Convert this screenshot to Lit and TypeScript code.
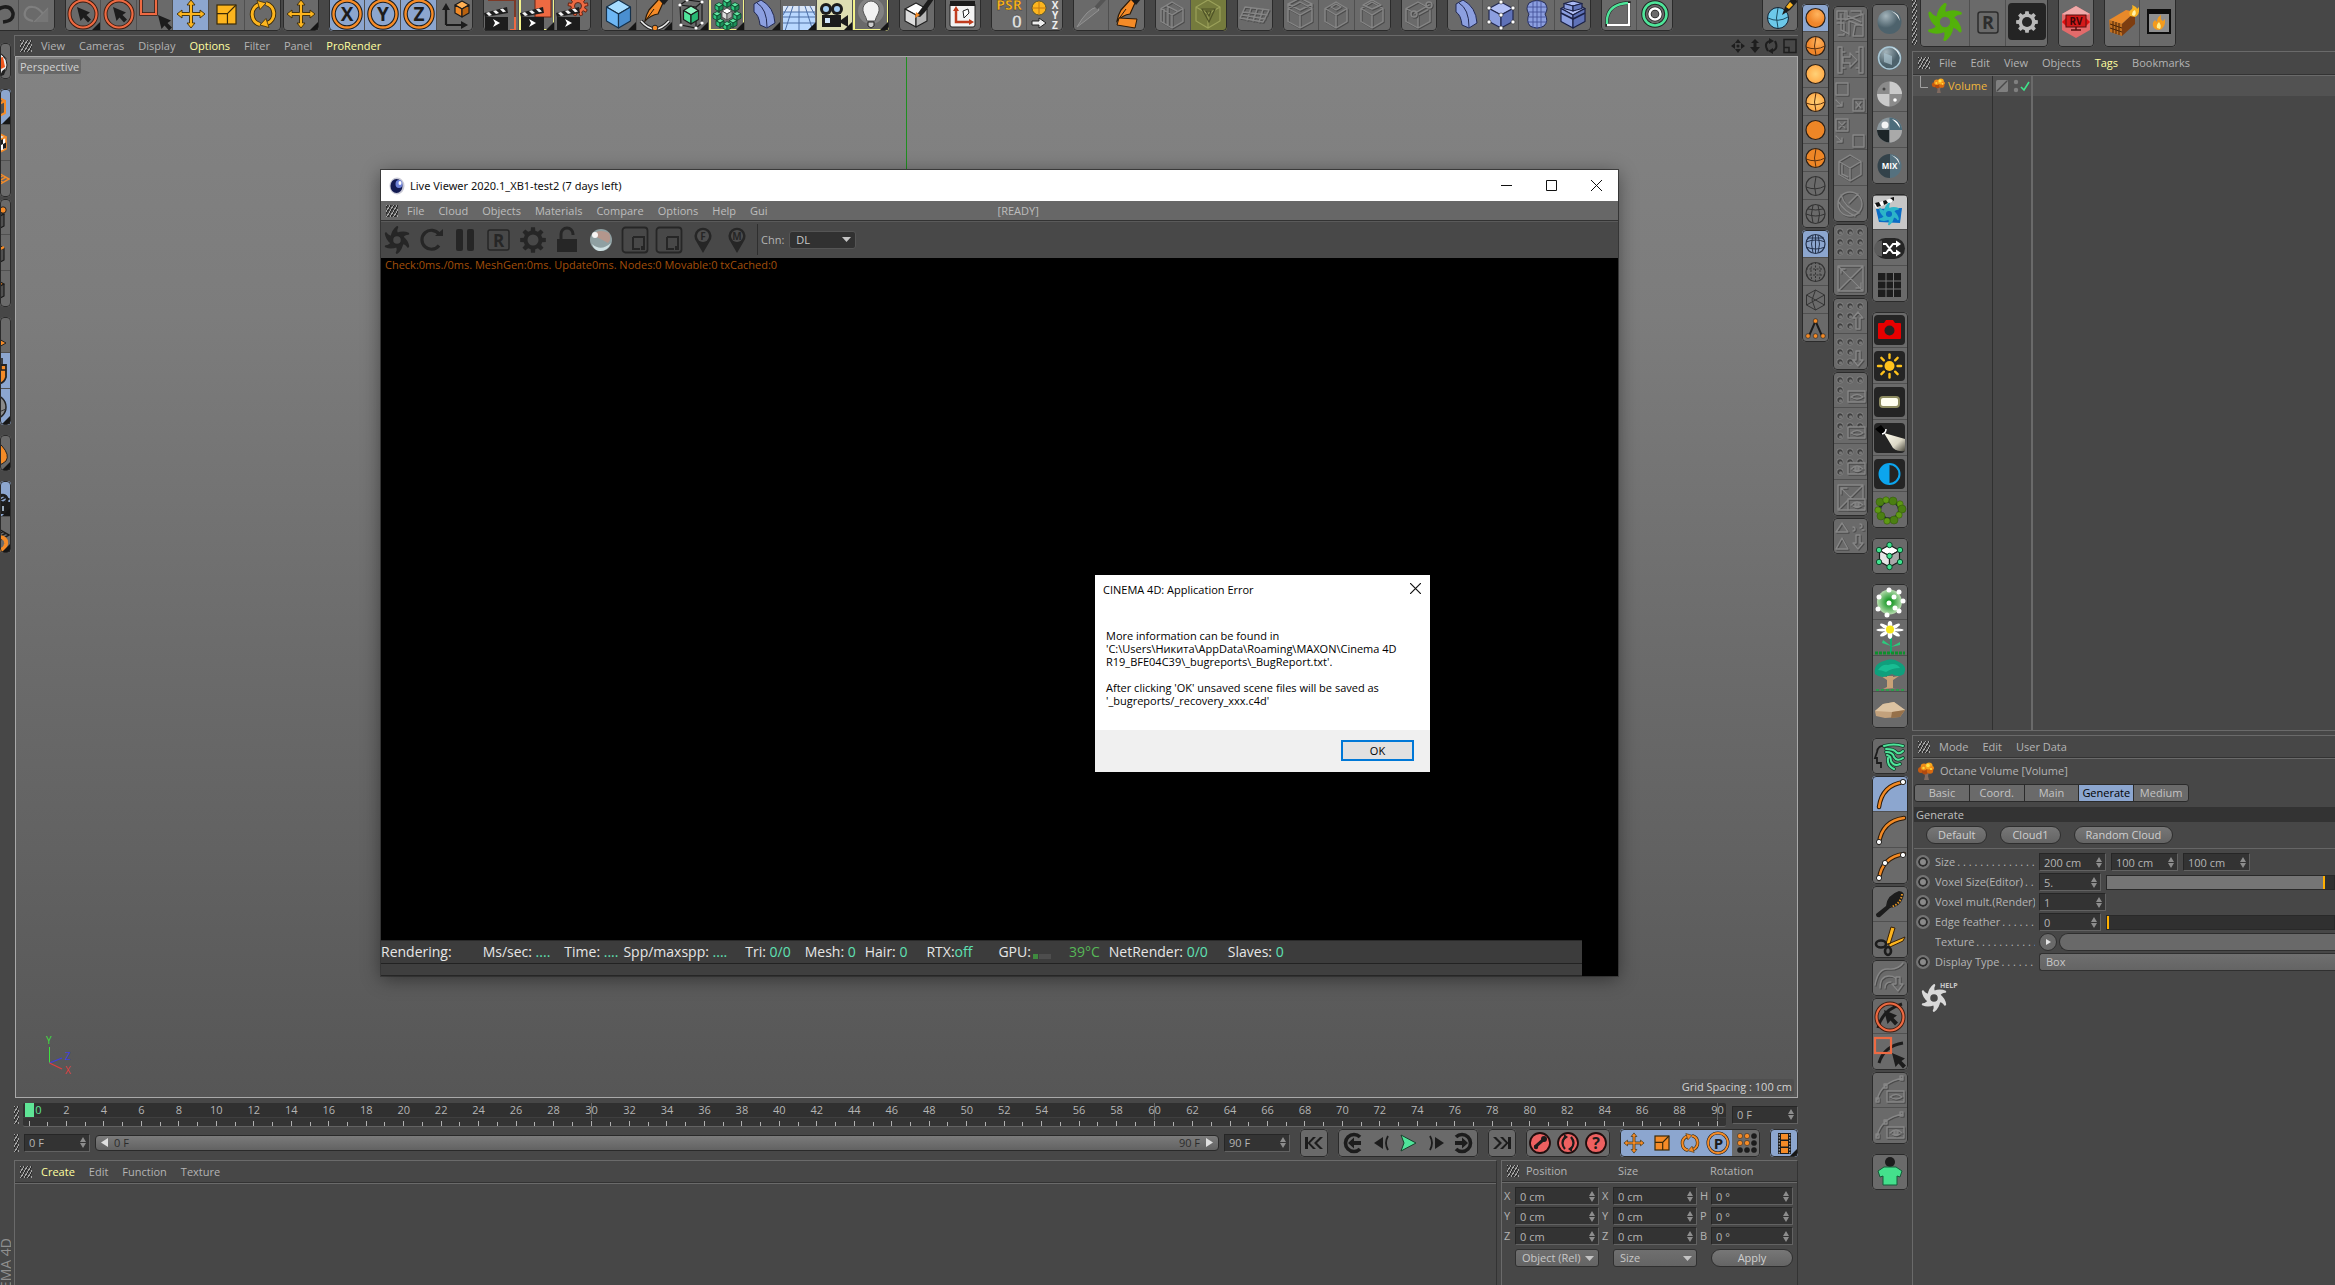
import { LitElement, html, svg, css } from "lit";
import type { SVGTemplateResult } from "lit";
import { customElement } from "lit/decorators.js";

type Art = SVGTemplateResult;

/* ---------- drawing helpers ---------- */

const INK = "#1c1c1c";
const AMBER = "#fdb51e";
const ORANGE = "#f58b27";
const RED = "#ee6a42";
const MINT = "#4fe59a";
const PERI = "#8c9fe0";

const wire = (cx: number, cy: number, w: number, h: number) => {
  const q = h / 2;
  return `M${cx} ${cy - h}L${cx + w} ${cy - q}V${cy + q}L${cx} ${cy + h}L${cx - w} ${cy + q}V${cy - q}ZM${cx - w} ${cy - q}L${cx} ${cy}L${cx + w} ${cy - q}M${cx} ${cy}V${cy + h}`;
};

const cube = (cx: number, cy: number, w: number, h: number, top: string, left: string, right: string, line = INK, lw = 1.2): Art => {
  const q = h / 2;
  return svg`<g stroke=${line} stroke-width=${lw} stroke-linejoin="round">
    <path fill=${top} d=${`M${cx} ${cy - h}L${cx + w} ${cy - q}L${cx} ${cy}L${cx - w} ${cy - q}Z`}/>
    <path fill=${left} d=${`M${cx - w} ${cy - q}L${cx} ${cy}V${cy + h}L${cx - w} ${cy + q}Z`}/>
    <path fill=${right} d=${`M${cx + w} ${cy - q}L${cx} ${cy}V${cy + h}L${cx + w} ${cy + q}Z`}/></g>`;
};

const emboss = (d: string, lw = 1.4): Art => svg`<g fill="none" stroke-width=${lw} stroke-linejoin="round" stroke-linecap="round">
  <path d=${d} stroke="#4b4b4b" transform="translate(1 1)"/><path d=${d} stroke="#868686"/></g>`;

const cursor = (x: number, y: number, s = 1): Art =>
  svg`<path fill=${INK} transform=${`translate(${x} ${y}) scale(${s})`} d="M0 0L3.5 14L6.5 10.5L11 15.5L14 12.5L9.5 8L13 5.500Z"/>`;

const gear = (cx: number, cy: number, ro: number, ri: number, n: number) => {
  let d = "";
  for (let i = 0; i < n; i++) {
    const a = (i / n) * Math.PI * 2;
    const s = Math.PI / n;
    const pts: [number, number][] = [[-0.62, ri], [-0.4, ro], [0.4, ro], [0.62, ri]];
    for (const [k, r] of pts) {
      d += `${d ? "L" : "M"}${(cx + Math.sin(a + k * s) * r).toFixed(2)} ${(cy - Math.cos(a + k * s) * r).toFixed(2)}`;
    }
  }
  return d + "Z";
};

const swirl = (cx: number, cy: number, s: number, fill: string): Art => svg`<g transform=${`translate(${cx} ${cy}) scale(${s})`}>
  <circle r="6.500" fill="none" stroke=${fill} stroke-width="4"/>
  ${[0, 60, 120, 180, 240, 300].map(a => svg`<path transform=${`rotate(${a})`} fill=${fill} d="M-7.500 -4Q-6.500 -12 -.5 -16.500Q1.500 -17 1.500 -15Q-1 -11 2 -6Z"/>`)}</g>`;

const corner = svg`<path d="M35 27V35H27Z" fill="#161616"/>`;

const four = (fill: string, cx = 18, cy = 19, s = 1): Art =>
  svg`<path transform=${`translate(${cx} ${cy}) scale(${s})`} fill=${fill} stroke="#3a2a08" stroke-width=".9" stroke-linejoin="round"
   d="M0 -14L4 -9H1.500V-1.500H9V-4L14 0L9 4V1.500H1.500V9H4L0 14L-4 9H-1.500V1.500H-9V4L-14 0L-9 -4V-1.500H-1.500V-9H-4Z"/>`;

const spin = (fill: string, cx = 18, cy = 19, s = 1): Art => svg`<g transform=${`translate(${cx} ${cy}) scale(${s})`}>
  ${[0, 180].map(a => svg`<g transform=${`rotate(${a})`}>
    <path d="M-3 10.500A10.500 10.500 0 0 1 -4 -9.500" fill="none" stroke="#3a2a08" stroke-width="4.800"/>
    <path d="M-3 10.500A10.500 10.500 0 0 1 -4 -9.500" fill="none" stroke=${fill} stroke-width="3"/>
    <path d="M-6 -13.500L3 -11L-3 -4.500Z" fill=${fill} stroke="#3a2a08" stroke-width=".8"/></g>`)}</g>`;

const scaleBox = (fill: string, x: number, y: number, w: number): Art => svg`<g stroke="#3a2a08" stroke-width="1.200">
  <rect x=${x} y=${y} width=${w} height=${w} fill=${fill}/>
  <path fill="none" d=${`M${x} ${y + w * 0.45}H${x + w * 0.55}V${y + w}M${x + w * 0.55} ${y + w * 0.45}L${x + w} ${y}`}/></g>`;

const ring = (letter: string): Art => svg`<circle cx="18" cy="19" r="13.500" fill="none" stroke=${INK} stroke-width="4.500"/>
  <circle cx="18" cy="19" r="13.500" fill="none" stroke=${ORANGE} stroke-width="2.400"/>
  <text x="18" y="26" text-anchor="middle" class="glyph" font-size="19" fill=${INK}>${letter}</text>`;

const pick = svg`<circle cx="18" cy="19" r="13.500" fill="none" stroke="#3c1b10" stroke-width="4"/>
  <circle cx="18" cy="19" r="13.500" fill="none" stroke=${RED} stroke-width="2.200"/>${cursor(12, 12)}`;

const clapper = (extra: Art): Art => svg`${extra}
  <path fill=${INK} d="M2 22H25V36H2Z"/><path fill=${INK} d="M1 18L24 12L25 18L2 22Z"/>
  <path fill="#f4f4f4" d="M3 18L6 17L9 20L6 21ZM10 16L13 15.200L16 18L13 19ZM17 14.200L20 13.400L23 16.500L20 17.300Z"/>
  <path fill="#fff" d="M10 24L17 28L10 32L12 28Z"/>`;

const ball = (fill: string, extra: Art = svg``, edge = "#2c2118"): Art =>
  svg`<circle cx="13.500" cy="14" r="9.500" fill=${fill} stroke=${edge} stroke-width="1.200"/>${extra}`;

const seams = svg`<path fill="none" stroke="#5b3210" stroke-width="1" d="M4 15Q14 19 23 14M14 4.500Q11 14 14 23.500"/>`;

const nine = (hide: number[] = []): Art => svg`${[0, 1, 2, 3, 4, 5, 6, 7, 8].filter(i => !hide.includes(i)).map(i => {
  const x = 7 + (i % 3) * 10, y = 8 + Math.floor(i / 3) * 10;
  return svg`<circle cx=${x} cy=${y} r="3.400" fill="#858585"/><circle cx=${x} cy=${y} r="2.700" fill="#414141"/><circle cx=${x + 0.6} cy=${y + 0.9} r="1.700" fill="#777"/>`;
})}`;

const eyeBox = (open: boolean): Art => svg`<path d="M15 19H33V31H15Z" fill="#6b6b6b"/>${emboss("M15 19H32V30H15Z")}
  ${emboss(open ? "M18 25Q24 19 30 25M20 26Q24 29 28 26M22 24H26V26H22Z" : "M18 25Q24 20 30 25Q24 29 18 25")}`;

const tile = svg`<rect x="2" y="3" width="31" height="30" rx="4" fill="#242424"/>`;

const glass = (fill: string, extra: Art = svg``): Art => svg`<circle cx="17.500" cy="18" r="12" fill=${fill}/>${extra}
  <path d="M19 7Q27 9 28 17Q24 9 19 7Z" fill="#fff" opacity=".85"/>`;

const badge = (inner: Art): Art => svg`<circle cx="14" cy="14" r="10" fill="#ee6060" stroke="#200d0d" stroke-width="1.800"/>${inner}`;

const grid45 = (stroke: string): Art =>
  svg`<path fill="none" stroke=${stroke} stroke-width="1.500" d="M10 18L22 11L34 18L22 25ZM16 14.500L28 21.500M28 14.500L16 21.500M13 16L25 23M31 16L19 23"/>`;

const pen = (tip: string): Art => svg`<path d="M12 15L22 4L26 8L21 19Q14 20 8 26Q9 20 12 15Z" fill=${tip} stroke="#2b1a08" stroke-width="1.200"/>
  <path d="M20 2L30 0L32 4L27 10Z" fill=${INK}/><path d="M9 25L17 14" stroke="#2b1a08"/>`;

const flame = svg`<path d="M8 10H13L12 14L13 18H8L9 14Z" fill="#806a60"/>
  <circle cx="5" cy="8" r="3" fill="#c65a10"/><circle cx="9" cy="9.500" r="3" fill="#b04a10"/><circle cx="14" cy="8.500" r="3.200" fill="#d8690f"/>
  <circle cx="8" cy="5" r="3.400" fill="#ee8a17"/><circle cx="13" cy="4" r="3.600" fill="#f9a81a"/><circle cx="16" cy="6" r="2" fill="#f08a14"/>
  <circle cx="12" cy="3.500" r="1.800" fill="#ffe04a"/><circle cx="7.500" cy="6" r="1.300" fill="#ffd23a"/><circle cx="15" cy="7" r="1" fill="#ffe04a"/>`;

const curve = (dots: [number, number][]): Art => svg`<path d="M7 31Q10 9 32 6" fill="none" stroke="#2c1a08" stroke-width="4.500" stroke-linecap="round"/>
  <path d="M7 31Q10 9 32 6" fill="none" stroke="#f28a25" stroke-width="2.400" stroke-linecap="round"/>
  ${dots.map(([x, y]) => svg`<circle cx=${x} cy=${y} r="2.600" fill="#fff" stroke="#222"/>`)}`;

const pin = (l: string): Art => svg`<path d="M14 27L7 15A8.500 8.500 0 1 1 21 15Z" fill="#262626"/><circle cx="14" cy="10" r="6" fill="#4d4d4d"/>
  <text x="14" y="13.500" text-anchor="middle" class="glyph" font-size="10" fill="#262626">${l}</text>`;

/* ---------- icon table ---------- */

const icons: Record<string, Art> = {
  undo: svg`<path d="M20 27Q31 26 30 18Q28 11 21 12Q14 13 13 20" fill="none" stroke=${INK} stroke-width="3.500"/>`,
  redo: svg`<path d="M14 26Q4 24 6 17Q8 11 14 12Q19 12 25 20M28 15V26H17Z" fill="none" stroke="#7f7f7f" stroke-width="2.200"/><path d="M29 14V27H16Z" fill="#767676"/>`,
  pick,
  boxpick: svg`<rect x="4" y="3" width="15" height="16" fill="none" stroke="#3c1b10" stroke-width="3.500"/><rect x="4" y="3" width="15" height="16" fill="none" stroke=${RED} stroke-width="2"/>${cursor(21, 20)}`,
  move: four(AMBER),
  scale: scaleBox(AMBER, 8, 10, 19),
  rotate: spin(AMBER),
  axisX: ring("X"),
  axisY: ring("Y"),
  axisZ: ring("Z"),
  coord: svg`<path d="M9 30V13M9 30H26" stroke=${INK} stroke-width="2.200"/><path d="M9 8L13 15H5ZM31 30L24 26V34Z" fill=${INK}/>${cube(25, 14, 7, 8, "#ffb054", "#f28a25", "#b9620f")}`,
  render: clapper(svg`<path d="M5 5H32V35H27" fill="none" stroke="#7d3a28" stroke-width="2"/><path d="M27 35H32V22" fill="none" stroke=${RED} stroke-width="2"/>`),
  renderPv: clapper(svg`<rect x="16" y="4" width="16" height="18" fill=${RED} stroke="#6a2412"/>`),
  renderSet: clapper(svg`<path d=${gear(23, 11, 10, 7, 9)} fill=${RED} stroke="#6a2412"/><circle cx="23" cy="11" r="3.500" fill="#6b6b6b" stroke="#6a2412"/>`),
  cube: cube(17.5, 19, 12, 14, "#a6dcff", "#6db7f5", "#4a8fd0", "#16324c"),
  pen: svg`${pen(ORANGE)}<path d="M4 26Q18 42 32 26" fill="none" stroke="#222" stroke-width="3.500"/><path d="M4 26Q18 42 32 26" fill="none" stroke="#eee" stroke-width="1.600"/><circle cx="18" cy="33" r="2.800" fill=${ORANGE} stroke="#222"/>`,
  subdiv: svg`<path d="M7 10L14 5L29 7V28L23 33L8 30ZM7 10L23 12L29 7M23 12V33" fill="none" stroke=${INK} stroke-width="1.200"/>${cube(18, 20, 7.5, 9, "#8cf7c0", MINT, "#27b873")}
    ${[[7, 10], [14, 5], [29, 7], [29, 28], [23, 33], [8, 30]].map(([x, y]) => svg`<circle cx=${x} cy=${y} r="1.600" fill="#fff"/>`)}`,
  cloner: svg`${[[18, 8], [26, 12], [28, 21], [24, 28], [18, 31], [11, 28], [8, 21], [10, 12]].map(([x, y]) => cube(x, y, 4, 4.5, "#5fe39f", "#2fc57d", "#1d8f58", "#0d4028", 0.8))}${cube(18, 19, 5, 6, "#fff", "#ddd", "#aaa", "#444", 0.8)}`,
  bend: svg`<path d="M9 9L16 5Q29 12 30 28L22 33L15 30Q14 20 9 17Z" fill=${PERI} stroke="#232a52"/><path d="M12 8Q22 14 22 32" fill="none" stroke="#232a52"/>`,
  floor: svg`<rect x="2" y="11" width="32" height="25" fill="#b9d8ff"/><rect x="2" y="11" width="32" height="6" fill="#d9e5f7"/><path d="M2 17H34M2 22H34M2 28H34M18 11V36M12 11L4 36M24 11L32 36M7 11L2 20M29 11L34 20" stroke="#4c6ea5" fill="none"/>`,
  camera: svg`<circle cx="9" cy="14" r="6" fill=${INK}/><circle cx="20" cy="14" r="6" fill=${INK}/><circle cx="9" cy="14" r="3" fill="#a5cff5"/><circle cx="20" cy="14" r="3" fill="#a5cff5"/><rect x="5" y="20" width="19" height="12" fill=${INK}/><path d="M24 25L31 20V32L24 28Z" fill=${INK}/><rect x="8" y="23" width="5" height="5" fill="#cfe4fb"/>`,
  bulb: svg`<circle cx="18" cy="16" r="13" fill="#999" opacity=".5"/><path d="M14 26Q13 22 11 19Q8 12 13 8Q18 4 23 8Q28 12 25 19Q23 22 22 26Z" fill="#f2f2f2" stroke="#555"/><path d="M15 27H21V31L18 33L15 31Z" fill="#ccc" stroke="#222"/>`,
  paint: svg`${cube(17, 20, 11, 12, "#fff", "#ddd", "#b5b5b5", "#222")}<path d="M17 21L22 14L26 17L21 22ZM22 14L31 2L35 4L26 17Z" fill=${INK}/><path d="M16 23L17 17L21 20Z" fill=${ORANGE}/>`,
  axisWin: svg`<rect x="5" y="8" width="25" height="24" rx="2" fill="#f3f3f3" stroke="#222"/><rect x="5" y="6" width="25" height="5" fill=${INK}/><path d="M11 14V27H25" fill="none" stroke="#c03c1e" stroke-width="2.500"/><path d="M11 11L14 16H8ZM29 27L24 24V30Z" fill="#c03c1e"/><path d="M18 16L23 14L24 18L19 23Z" fill="#fff" stroke="#222"/>`,
  psr: svg`<text x="18" y="15" text-anchor="middle" class="glyph" font-size="14" fill=${AMBER} stroke="#222" stroke-width=".3">PSR</text><text x="26" y="33" text-anchor="middle" class="glyph" font-size="18" fill="#ddd" stroke="#222" stroke-width=".3">0</text>`,
  xyz: svg`<circle cx="12" cy="13" r="7" fill=${AMBER} stroke="#553"/><path d="M12 6V20M5 13H19" stroke="#c47a10"/><path d="M5 26H12V23L19 28L12 33V30H5Z" fill="#eee" stroke="#222"/><text text-anchor="middle" class="glyph" font-size="10" fill="#eee"><tspan x="28" y="14">X</tspan><tspan x="28" y="24">Y</tspan><tspan x="28" y="34">Z</tspan></text>`,
  knife: svg`<path d="M4 32Q14 14 24 12L26 15L12 26Z" fill="#777" stroke="#929292"/><path d="M23 13L32 3" stroke="#555" stroke-width="4"/>`,
  polypen: svg`${pen(ORANGE)}<path d="M10 23L28 24L26 33L8 30Z" fill=${ORANGE} stroke="#2b1a08"/>`,
  ghost1: emboss(wire(17, 20, 11, 13) + "M9 14V28M13 12V30M12 11L22 16"),
  ghost2: svg`<path d=${wire(17, 19, 12, 14)} fill="none" stroke="#9ba15a" stroke-width="1.200"/><path d="M11 14H24L18 27ZM15 16H20L18 21Z" fill="none" stroke="#4e5226" stroke-width="1.200"/>`,
  ghostGrid: emboss("M8 12L32 15L26 27L3 23ZM14 13L10 25M20 14L16 26M26 14L22 27M6 17L30 20M5 20L28 24"),
  ghostCube1: emboss(wire(17, 20, 12, 13) + "M5 9L17 15L29 9M5 9L17 3L29 9V12M5 9V12"),
  ghostCube2: emboss(wire(17, 20, 11, 13) + "M12 12L17 9L22 12L17 15Z"),
  ghostCube3: emboss(wire(17, 20, 11, 13) + "M8 10L17 14L26 10L17 5Z"),
  ghostLink: svg`${emboss(wire(17, 20, 12, 13))}${emboss("M14 18L28 10M28 7A3 3 0 1 1 28 13A3 3 0 1 1 28 7M13 16A3 3 0 1 1 13 22A3 3 0 1 1 13 16")}`,
  lattice: svg`${cube(18, 20, 12, 13, "#b2c0f5", PERI, "#5f72b8", "#232a52")}${[[18, 7], [30, 13], [6, 13], [18, 20], [30, 27], [6, 27], [18, 33]].map(([x, y]) => svg`<circle cx=${x} cy=${y} r="2" fill="#fff" stroke="#333" stroke-width=".6"/>`)}`,
  mesh: svg`<path d="M10 8Q18 3 26 8Q30 14 26 19Q30 26 25 31Q18 35 11 31Q7 26 10 19Q6 14 10 8Z" fill=${PERI} stroke="#232a52"/><path d="M14 6V33M18 5V34M22 6V33M8 12H28M9 17H27M9 22H27M8 27H28" fill="none" stroke="#45549a" stroke-width=".9"/>`,
  capBox: svg`${cube(18, 20, 12, 13, "#b2c0f5", PERI, "#5f72b8", "#1b2146")}<path d="M6 18L18 24L30 18" fill="none" stroke="#1b2146" stroke-width="1.800"/>${cube(18, 11, 9, 5, "#a9b8f3", PERI, "#5f72b8", "#1b2146")}`,
  quarter: svg`<path d="M6 30V24Q8 9 26 8H28V30Z" fill="none" stroke="#222" stroke-width="3.500"/><path d="M6 30H28V8" fill="none" stroke="#fff" stroke-width="2.400"/><path d="M6 29V24Q8 9 27 8" fill="none" stroke=${MINT} stroke-width="2.400"/>`,
  rings: svg`<circle cx="18" cy="19" r="11.500" fill="none" stroke="#222" stroke-width="4.500"/><circle cx="18" cy="19" r="11.500" fill="none" stroke=${MINT} stroke-width="2.600"/><circle cx="18" cy="19" r="5.500" fill="none" stroke="#222" stroke-width="4"/><circle cx="18" cy="19" r="5.500" fill="none" stroke="#fff" stroke-width="2.400"/>`,
  sculpt: svg`<circle cx="16" cy="23" r="10.500" fill="#6cc9ea" stroke="#123"/><path d="M6 23Q16 28 26 22M16 13Q13 23 16 33" fill="none" stroke="#1c4c60"/><path d="M20 20L23 12L30 3L36 6L28 15Z" fill=${INK}/><path d="M24 12L28 7L31 10L27 14Z" fill=${AMBER}/>`,

  globe: svg`<circle cx="19" cy="22" r="13" fill="#eee" stroke="#222"/><path d="M19 16L28 14L30 24L22 28Z" fill="#f0561c"/><path d="M26 10L32 16L29 15ZM31 25L29 32L25 33L27 28Z" fill="#222"/>`,
  model: cube(19, 18, 11, 12, "#5a5a5a", "#444", "#505050", ORANGE, 2),
  texture: svg`${cube(19, 18, 12, 12, "#ddd", "#ccc", "#fff", ORANGE, 1.6)}<path d="M24 16L28 14V19L24 21ZM28 19L31 17.500V23L28 24Z" fill=${INK}/>`,
  plane: grid45(ORANGE),
  points: svg`${cube(18, 21, 11, 12, "#5a5a5a", "#444", "#505050")}<circle cx="28" cy="11" r="3.200" fill=${ORANGE} stroke="#222"/>`,
  edges: svg`${cube(18, 19, 11, 12, "#5a5a5a", "#444", "#505050")}<path d="M18 18L29 12" stroke=${ORANGE} stroke-width="2.500"/>`,
  polys: svg`${cube(18, 19, 11, 12, ORANGE, "#444", "#505050")}`,
  axisMode: svg`<path d="M10 26H26" stroke=${ORANGE} stroke-width="2"/><path d="M31 26L24 22V30Z" fill=${ORANGE} stroke="#222"/>`,
  mouse: svg`<path d="M12 12H31V24Q29 31 22 31Q12 31 12 22Z" fill=${ORANGE} stroke="#222" stroke-width="1.800"/><path d="M12 17H31M26 12V17M27 5V12" stroke="#222" stroke-width="1.600"/>`,
  solo: svg`<circle cx="19" cy="18" r="12" fill="#8a8a8a" stroke="#222" stroke-width="1.500"/><path d="M7 22Q20 26 31 20" fill="none" stroke="#333"/>`,
  magnet: svg`<path d="M10 30Q6 20 17 12Q24 6 27 11Q35 20 31 26Q24 33 10 30Z" fill=${ORANGE} stroke="#222"/>`,
  lock: svg`${grid45(INK)}<rect x="21" y="21" width="14" height="12" fill=${INK}/><path d="M24 21V18A4 4 0 0 1 32 18V21" fill="none" stroke=${INK} stroke-width="2.600"/><rect x="27" y="25" width="2" height="5" fill="#9ab"/>`,
  snapRot: svg`${grid45(INK)}<path d="M23 20Q32 20 31 27Q30 33 24 33" fill="none" stroke=${ORANGE} stroke-width="4"/>`,

  s1: ball("url(#gOrange)"), s2: ball("url(#gOrange)", seams), s3: ball("url(#gPeach)"), s4: ball("url(#gPeach)", seams),
  s5: ball("#ee8626"), s6: ball("#ee8626", seams),
  s7: ball("none", svg`<path fill="none" stroke="#333" d="M4 15Q14 19 23 14M14 4.500Q11 14 14 23.500"/>`, "#333"),
  s8: ball("none", svg`<path fill="none" stroke="#333" d="M4 14Q14 18 23 14M11 5Q8 14 11 23M16 5Q19 14 16 23M6 9Q14 11 21 9"/>`, "#333"),
  s9: ball("none", svg`<path fill="none" stroke="#26344e" d="M4 12Q14 8 23 12M4 17Q14 21 23 17M5 8H22M11 5Q8 14 11 23M16 5Q19 14 16 23M13.500 4V24"/>`, "#26344e"),
  s10: ball("none", svg`<path fill="none" stroke="#333" stroke-dasharray="2 1.500" d="M4 11H23M4 17H23M10 5Q8 14 10 23M17 5Q19 14 17 23M13.500 4V24"/>`, "#333"),
  s11: svg`<path fill="none" stroke="#333" d="M13.500 4L22.500 9V19L13.500 24L4.500 19V9ZM4.500 9L22.500 19M22.500 9L4.500 19M13.500 4L10 14L13.500 24"/>`,
  s12: svg`<path fill="none" stroke=${INK} stroke-width="2" d="M7 22L13.500 7L20 22"/>${[[13.5, 7], [6, 22], [13.5, 22], [21, 22]].map(([x, y]) => svg`<circle cx=${x} cy=${y} r="2.300" fill=${ORANGE} stroke="#222" stroke-width=".6"/>`)}`,

  g1: emboss("M4 5H14V13H4ZM18 5H28V10M4 17H11V29H5M15 10L28 16M22 19H30V30H20ZM8 8V24L16 28M12 5V14L30 8V20L16 15V29"),
  g2: emboss("M5 5H9V31H5ZM26 5H30V31H26ZM9 10H12M9 26H12M26 10H23M26 26H23M10 15H17V11L24 18L17 25V21H10Z"),
  g3: emboss("M3 5H15V17H3ZM3 22L9 28V24M9 28H4M20 21H31V33H20ZM23 24L28 30M28 24L23 30"),
  g4: emboss("M3 5H15V17H3ZM6 8L12 14M12 8L6 14M3 22L9 28V24M9 28H4M20 21H31V33H20Z"),
  g5: emboss(wire(17, 18, 11, 13) + "M9 15V24L15 27"),
  g6: emboss("M29 18A12 12 0 1 1 5 18A12 12 0 1 1 29 18M8 9Q12 22 26 27M5 15Q12 26 22 30M16 17L25 8"),
  g7: nine(),
  g8: emboss("M5 6H30V31H5ZM5 6L30 31M30 6L5 31M12 9H8V13M23 28H28V23"),
  g9: svg`${nine([5, 8])}${emboss("M23 31V20H20L25 14L30 20H27V31Z")}`,
  g10: svg`${nine([5, 8])}${emboss("M23 17V26H20L25 32L30 26H27V17Z")}`,
  g11: svg`${nine([4, 5, 7, 8])}${eyeBox(false)}`,
  g12: svg`${nine([7, 8])}${eyeBox(false)}`,
  g13: svg`${nine([7, 8])}${eyeBox(true)}`,
  g14: svg`${emboss("M5 5H30V30H5ZM8 8L28 28M8 14V8H14M30 5L5 30")}${eyeBox(true)}`,
  g15: emboss("M9 5L15 14H3ZM9 20L15 31H3ZM20 9A2 2 0 1 1 20 13M27 6A2 2 0 1 1 27 10M29 12H31M23 17V25H20L25 31L30 25H27V17Z"),

  m1: glass("url(#gSteel)"),
  m2: glass("url(#gSteel)", svg`<path d="M12 13L20 16V25L12 22Z" fill="#a9c2cd" opacity=".7"/><circle cx="17.500" cy="18" r="11" fill="none" stroke="#a9c6d4" stroke-width="1.500"/>`),
  m3: svg`<circle cx="17.500" cy="18" r="12.500" fill="#757575"/><path d="M17.500 18V5.500A12.500 12.500 0 0 0 5 18ZM17.500 18V30.500A12.500 12.500 0 0 0 30 18Z" fill="#8b8b8b"/><path d="M17.500 18V5.500A12.500 12.500 0 0 1 30 18ZM17.500 18V30.500A12.500 12.500 0 0 1 5 18Z" fill="#cacaca"/><circle cx="12" cy="13" r="1.500" fill="#444"/><circle cx="23" cy="24" r="1.800" fill="#fff"/>`,
  m4: svg`<circle cx="17.500" cy="18" r="12.500" fill="#8b979d"/><path d="M17.500 18V30.500A12.500 12.500 0 0 1 5 18Z" fill="#1d2528"/><path d="M17.500 18V5.500A12.500 12.500 0 0 1 30 18Z" fill="#4c6c7b"/><path d="M17.500 18H30A12.500 12.500 0 0 1 17.500 30.500Z" fill="#a9a9a9"/><circle cx="13" cy="13" r="3.500" fill="#fff" opacity=".9"/><path d="M20 7Q27 9 28 16Q24 10 20 7Z" fill="#fff"/>`,
  m5: glass("url(#gDeep)", svg`<text x="17.500" y="21" text-anchor="middle" class="glyph" font-size="8" fill="#fff">MIX</text>`),
  oct: svg`<rect x="1" y="2" width="34" height="33" fill="#c6c6c6"/><path d="M4 15L30 14L28 29L7 28Z" fill="#0b6cc4"/><path d="M2 10L20 4V8L4 14Z" fill="#fff"/><path d="M3 9L7 8L9 12L5 13ZM11 7L14 6L16 9L12 11ZM18 4L22 3L22 7Z" fill="#111"/>${swirl(17, 20, 0.68, "#2cb5c8")}`,
  shuffle: svg`<rect x="3" y="8" width="30" height="21" rx="10.500" fill="#242424"/><path d="M10 10.500A8 8 0 0 0 10 26.500Z" fill="#5c5c5c"/><path d="M11 14H14L21 23H25M11 23H14L21 14H25" fill="none" stroke="#fff" stroke-width="2"/><path d="M24 10.500L29 14L24 17.500ZM24 19.500L29 23L24 26.500Z" fill="#fff"/>`,
  blackGrid: svg`<rect x="6" y="7" width="23" height="24" fill="#1d1d1d"/><path d="M14 7V31M21.500 7V31M6 15H29M6 23H29" stroke="#777"/>`,
  redCam: svg`${tile}<path d="M7 11H12L14 8H21L23 11H28Q29 11 29 12V26Q29 27 28 27H7Q6 27 6 26V12Q6 11 7 11Z" fill="#e60000"/><circle cx="17.500" cy="18.500" r="5" fill="#242424"/>`,
  sun: svg`${tile}<circle cx="17.500" cy="18" r="5" fill="#ffc21c"/>${[0, 45, 90, 135, 180, 225, 270, 315].map(a => svg`<path transform=${`rotate(${a} 17.500 18)`} d="M17.500 10V6.500" stroke="#ffc21c" stroke-width="2.400" stroke-linecap="round"/>`)}`,
  area: svg`${tile}<rect x="7" y="12" width="21" height="12" rx="4" fill="#8d8b60"/><rect x="9" y="14" width="17" height="8" rx="2" fill="#fffef0"/>`,
  spot: svg`${tile}<path d="M12 13L33 19V31Q26 32 21 28Z" fill="url(#gBeam)"/><path d="M3 9L9 5L14 11L10 15Z" fill="#000"/><path d="M10 14Q14 13 14 9" fill="none" stroke="#fff" stroke-width="1.500"/>`,
  half: svg`${tile}<circle cx="17.500" cy="18" r="10" fill="none" stroke="#0ca5ee" stroke-width="2"/><path d="M17.500 8A10 10 0 0 0 17.500 28Z" fill="#0ca5ee"/>`,
  wreath: svg`<ellipse cx="17.500" cy="18" rx="10" ry="9" fill="none" stroke="#1c2433" stroke-width="3"/>${[[8, 10], [14, 8], [21, 9], [28, 12], [30, 17], [27, 23], [22, 28], [15, 29], [9, 24], [6, 18]].map(([x, y], i) => svg`<circle cx=${x} cy=${y} r=${i % 2 ? 3.2 : 4} fill=${i % 2 ? "#5f9a14" : "#4b7f12"} stroke="#355c0c" stroke-width=".6"/>`)}`,
  nodes: svg`${cube(17.5, 18, 10, 11, "#fff", "#e6e6e6", "#aaa")}${[[17.5, 7], [28, 12], [7, 12], [17.5, 18], [28, 24], [7, 24], [17.5, 29]].map(([x, y]) => svg`<circle cx=${x} cy=${y} r="2.700" fill="#3fe38f" stroke="#0e4a2b"/>`)}`,
  cell: svg`<circle cx="17.500" cy="18" r="12.500" fill="url(#gCell)"/>${[[17, 6], [27, 8], [31, 17], [27, 27], [15, 31], [6, 25], [7, 13], [17, 19], [22, 13], [23, 24]].map(([x, y]) => svg`<circle cx=${x} cy=${y} r="2.500" fill="#fff"/>`)}`,
  daisy: svg`<path d="M19 16V33" stroke="#0fae6c" stroke-width="2"/><path d="M19 26L11 20L10 23ZM19 27L28 22L28 25Z" fill="#2ccb7e"/><path d="M3 33H33" stroke="#0d8f2c" stroke-width="3" stroke-dasharray="3 1"/>${[0, 45, 90, 135, 180, 225, 270, 315].map(a => svg`<ellipse transform=${`translate(18 10) scale(1.300 .85) rotate(${a})`} cx="0" cy="-6" rx="1.800" ry="4.500" fill="#fff"/>`)}<circle cx="18" cy="9.500" r="4" fill="#f6e71c"/>`,
  tree: svg`<path d="M15 20H21V32H25L11 33L15 31ZM15 24L9 20L15 21ZM21 24L27 20L21 21Z" fill="#c9a177"/><path d="M3 18Q1 8 12 5Q20 1 27 6Q36 10 32 18Q26 22 20 18Q10 24 3 18Z" fill="#0f9f7c"/><path d="M6 14Q10 8 16 9Q24 6 28 12Q20 12 14 16Q9 14 6 14Z" fill="#18bd93"/><path d="M4 34H32" stroke="#2c9c4b" stroke-width="2" stroke-dasharray="3 2"/>`,
  rock: svg`<path d="M3 19L11 12L22 10L33 18L28 25L13 26L4 24Z" fill="#c2a17c"/><path d="M3 19L11 12L22 10L33 18L20 20Z" fill="#dcc3a2"/><path d="M20 20L33 18L28 25L19 26Z" fill="#96714a"/>`,
  hair: svg`<path d="M13 8Q6 7 5 14L3 20H5V25H9V30" fill="none" stroke=${INK} stroke-width="1.800"/>
    <path d="M12 8Q22 5 31 8M14 11Q22 11 24 14Q27 17 31 13M14 14Q21 14 22 19Q25 24 31 20M15 17Q19 18 19 23Q22 29 28 26M16 20Q15 28 22 31" fill="none" stroke="#123f2c" stroke-width="3.600" stroke-linecap="round"/>
    <path d="M12 8Q22 5 31 8M14 11Q22 11 24 14Q27 17 31 13M14 14Q21 14 22 19Q25 24 31 20M15 17Q19 18 19 23Q22 29 28 26M16 20Q15 28 22 31" fill="none" stroke=${MINT} stroke-width="2" stroke-linecap="round"/>`,
  h1: curve([[31, 6]]), h2: curve([[7, 30]]), h3: curve([[31, 7], [13, 15], [7, 30]]),
  brush: svg`<path d="M4 28L14 20Q15 9 27 5Q34 6 31 12Q28 21 18 22L8 31Q4 32 4 28Z" fill=${INK}/><path d="M30 8Q29 18 19 21" fill="none" stroke="#e39322" stroke-width="2" stroke-dasharray="1.500 1.500"/>`,
  scissors: svg`<path d="M14 22L19 5L23 6L18 22ZM16 22L33 15L31 19L18 25Z" fill=${AMBER} stroke="#3a2206"/><ellipse cx="9" cy="22" rx="5" ry="3.500" fill="none" stroke=${INK} stroke-width="2.600"/><ellipse cx="16" cy="29" rx="3" ry="4" fill="none" stroke=${INK} stroke-width="2.600"/>`,
  hairGhost: emboss("M3 25Q6 8 16 9Q26 10 31 3M8 28Q8 16 17 16Q25 16 24 22M13 28Q13 22 19 22M24 17V24H20L26 31L31 24H28V17Z"),
  hairPick: svg`<path d="M6 30Q10 12 30 6" fill="none" stroke=${INK} stroke-width="3"/>${pick}`,
  hairBox: svg`<path d="M7 29Q12 12 31 9" fill="none" stroke=${INK} stroke-width="3"/><rect x="3" y="4" width="16" height="15" fill="none" stroke=${RED} stroke-width="2.200"/>${cursor(20, 19)}`,
  hg1: svg`${emboss("M5 28Q9 10 31 6M4 26H7V30H4ZM12 12H15V16H12ZM28 4H31V8H28Z")}${eyeBox(false)}`,
  hg2: svg`${emboss("M5 28Q9 10 31 6M4 26H7V30H4ZM12 12H15V16H12ZM28 4H31V8H28Z")}${eyeBox(true)}`,
  shirt: svg`<circle cx="18" cy="8" r="5" fill=${INK}/><path d="M12 13H24L30 17L28 23L25 22V31H11V22L8 23L6 17Z" fill="#44e08c" stroke="#145a38"/>`,

  octane: swirl(25, 22, 1.15, "#53b10a"),
  recR: svg`<rect x="8" y="12" width="20" height="21" rx="2.500" fill="none" stroke="#2d2d2d" stroke-width="1.500"/><text x="18" y="29" text-anchor="middle" class="glyph" font-size="18" fill="#2d2d2d">R</text>`,
  cog: svg`<rect x="2" y="3" width="38" height="37" rx="4" fill="#242424"/><path d=${gear(21, 22, 11, 8.5, 8)} fill="#b9b9b9"/><circle cx="21" cy="22" r="5" fill="#242424"/>`,
  rv: svg`<path d="M18 6L32 14V30L18 38L4 30V14Z" fill="#e26b6b"/><path d="M18 6L32 14L18 18L4 14Z" fill="#f0a9a9"/><path d="M4 22L8 18V26ZM32 22L28 18V26Z" fill="#e01010"/><rect x="8" y="15" width="20" height="12" fill="#d41a1a" stroke="#571010"/><text x="18" y="25" text-anchor="middle" class="glyph" font-size="10" fill="#3c0707">RV</text><path d="M13 30H23M18 27V30" stroke="#571010" stroke-width="1.500"/>`,
  bricks: svg`<path d="M5 20L18 24V36L6 32Z" fill="#c06f20"/><path d="M5 20L22 10L31 12L18 24Z" fill="#e8892a"/><path d="M18 24L31 12V24L18 36Z" fill="#7d3d10"/><path d="M6 24L18 28M6 28L18 32M9 21V33M12 22V34M15 23V35" stroke="#4c2608"/><path d="M26 16Q24 11 28 9Q29 7 28 5Q33 7 33 9L35 7Q36 15 31 17Z" fill="#f7b322"/><path d="M28 15Q28 11 31 10Q33 14 30 16Z" fill="#fff3ab"/>`,
  fireWin: svg`<rect x="8" y="10" width="22" height="23" fill="#8f8f8f" stroke="#0d0d0d" stroke-width="2"/><rect x="8" y="10" width="22" height="4" fill="#0d0d0d"/><path d="M14 28Q11 23 15 20L17 22Q17 17 21 15Q20 20 23 21L25 19Q26 28 19 30Q16 30 14 28Z" fill="#f49b1c"/><path d="M17 28Q16 25 19 22Q22 26 20 29Z" fill="#ffef8a"/>`,

  first: svg`<path d="M5 8H8V20H5ZM16 8L10 14L16 20H13L7.500 14L13 8ZM23 8L17 14L23 20H20L14 14L20 8Z" fill=${INK}/>`,
  prevKey: svg`<path d="M22 20A8.500 8.500 0 1 1 22 8" fill="none" stroke=${INK} stroke-width="3.600"/><path d="M10 14L16 8.500V12H23V16H16V19.500Z" fill=${INK}/>`,
  prev: svg`<path d="M17 8V20L8 14Z" fill=${INK}/><path d="M22 7Q18 14 22 21" fill="none" stroke=${INK} stroke-width="1.800"/>`,
  play: svg`<path d="M7 6L22 14L7 22L10 14Z" fill=${MINT} stroke="#17402b"/>`,
  next: svg`<path d="M13 8V20L22 14Z" fill=${INK}/><path d="M8 7Q12 14 8 21" fill="none" stroke=${INK} stroke-width="1.800"/>`,
  nextKey: svg`<path d="M6 8A8.500 8.500 0 1 1 6 20" fill="none" stroke=${INK} stroke-width="3.600"/><path d="M18 14L12 8.500V12H5V16H12V19.500Z" fill=${INK}/>`,
  last: svg`<g transform="rotate(180 14 14)"><path d="M5 8H8V20H5ZM16 8L10 14L16 20H13L7.500 14L13 8ZM23 8L17 14L23 20H20L14 14L20 8Z" fill=${INK}/></g>`,
  key: badge(svg`<path d="M9 18L17 11" stroke=${INK} stroke-width="3"/><circle cx="18" cy="10" r="3" fill=${INK}/><circle cx="10" cy="18" r="2.200" fill=${INK}/>`),
  autoKey: badge(svg`<path d="M11 8Q6 14 11 20M17 8Q22 14 17 20" fill="none" stroke=${INK} stroke-width="2.200"/><path d="M10 5L14 8L10 11ZM18 17L14 20L18 23Z" fill=${INK}/>`),
  askKey: badge(svg`<text x="14" y="20" text-anchor="middle" class="glyph" font-size="16" fill=${INK}>?</text>`),
  tMove: four(ORANGE, 14, 14, 0.72),
  tScale: scaleBox(ORANGE, 7, 7, 14),
  tRotate: spin(ORANGE, 14, 14, 0.7),
  tP: svg`<circle cx="14" cy="14" r="10" fill="none" stroke=${INK} stroke-width="3"/><circle cx="14" cy="14" r="10" fill="none" stroke=${ORANGE} stroke-width="1.800"/><text x="14.500" y="19.500" text-anchor="middle" class="glyph" font-size="15" fill=${INK}>P</text>`,
  tDots: svg`${[0, 1, 2, 3, 4, 5, 6, 7, 8].map(i => svg`<circle cx=${8 + (i % 3) * 7} cy=${7 + Math.floor(i / 3) * 7} r="2.600" fill=${[0, 1, 3, 4].includes(i) ? ORANGE : INK} stroke=${INK} stroke-width=".5"/>`)}`,
  film: svg`<rect x="8" y="4" width="13" height="21" fill=${INK}/><rect x="11" y="5" width="7" height="5.500" fill=${ORANGE}/><rect x="11" y="12" width="7" height="5.500" fill=${ORANGE}/><rect x="11" y="19" width="7" height="5" fill=${ORANGE}/><path d="M9.300 5V25M19.700 5V25" stroke="#a8a8a8" stroke-width="1.200" stroke-dasharray="1.500 1.500"/>`,

  lvSwirl: swirl(14, 14, 0.84, "#262626"),
  lvLoop: svg`<path d="M22 19.500A9.500 9.500 0 1 1 22 8" fill="none" stroke="#262626" stroke-width="3.200"/><path d="M18 10H26V3Z" fill="#262626"/>`,
  lvPause: svg`<rect x="5" y="3" width="7" height="22" rx="2" fill="#262626"/><rect x="16" y="3" width="7" height="22" rx="2" fill="#262626"/>`,
  lvR: svg`<rect x="3" y="4" width="21" height="20" rx="2" fill="none" stroke="#262626" stroke-width="1.500"/><text x="13.500" y="20.500" text-anchor="middle" class="glyph" font-size="17" fill="#262626">R</text>`,
  lvGear: svg`<path d=${gear(14, 14, 13, 9.5, 8)} fill="#262626"/><circle cx="14" cy="14" r="5.500" fill="#484848"/>`,
  lvLock: svg`<rect x="4" y="13" width="20" height="13" fill="#262626"/><path d="M8 13V8A6 6 0 0 1 20 8V9" fill="none" stroke="#262626" stroke-width="3"/>`,
  lvBall: svg`<circle cx="14" cy="14" r="11" fill="#8fa0a2"/><path d="M5 9Q12 2 22 7Q25 14 21 17Q12 12 5 9Z" fill="#b3968c"/><path d="M5 18Q14 26 24 17Q20 26 12 25Q7 24 5 18Z" fill="#cfe0e2"/><circle cx="8" cy="9" r="3" fill="#fff" opacity=".9"/>`,
  lvRegion: svg`<rect x="1.500" y="1.500" width="25" height="25" rx="3" fill="none" stroke="#262626" stroke-width="1.800"/><path d="M12 11H23V20M12 11V23H19" fill="none" stroke="#262626" stroke-width="2"/><path d="M20 20H24V24H20Z" fill="#262626"/>`,
  lvF: pin("F"),
  lvM: pin("M"),
};

/* Spec of a tool: name, then flags after dots: on, menu, hl, pale, olive. */
const tool = (spec: string, w: number, h: number) => {
  const [name, ...flags] = spec.split(".");
  return html`<button class="tool ${flags.join(" ")}" aria-label=${name}>
    <svg class="icon" width=${w} height=${h} viewBox=${`0 0 ${w} ${h}`} aria-hidden="true">${icons[name]}${flags.includes("menu")
      ? w === 28 ? svg`<path d="M27 20V27H20Z" fill="#161616"/>` : corner : ""}</svg></button>`;
};

const group = (specs: string, w = 36, h = 36, extra = "") =>
  html`<div class="group ${extra}" role="group">${specs.split(" ").map(s => tool(s, w, h))}</div>`;

const menu = (items: string, label: string) => html`<nav class="menubar" aria-label=${label}><span class="grip"></span>
  ${items.split("|").map(t => html`<button class="menu ${t.startsWith("*") ? "lit" : ""}">${t.replace("*", "")}</button>`)}</nav>`;

const field = (label: string, value: string) => html`<span class="field"><input type="text" aria-label=${label} .value=${value}>
  <svg width="6" height="11" viewBox="0 0 6 11" aria-hidden="true"><path d="M3 0L6 5H0ZM3 11L0 6H6Z" fill="#8d8d8d"/></svg></span>`;

const drop = (label: string, value: string, extra = "") => html`<span class="drop ${extra}"><select aria-label=${label}><option>${value}</option></select>
  <svg width="9" height="5" viewBox="0 0 9 5" aria-hidden="true"><path d="M0 0H9L4.500 5Z" fill="#c4c4c4"/></svg></span>`;

const TOP = ["undo redo", "pick.menu pick boxpick move.on scale rotate", "move.menu", "axisX.on axisY.on axisZ.on coord", "render renderPv.hl.menu renderSet",
  "cube.menu pen.menu subdiv.menu cloner.hl.menu bend.menu floor.menu camera.pale.menu bulb.hl.menu", "paint", "axisWin", "psr xyz", "knife polypen",
  "ghost1 ghost2.olive", "ghostGrid", "ghostCube1 ghostCube2 ghostCube3", "ghostLink", "bend lattice mesh capBox", "quarter rings", "sculpt"];

const LEFT = ["globe", "model.on.menu texture plane", "-points edges polys", "axisMode mouse.on solo.on.menu", "magnet.menu", "lock.on.menu snapRot.menu"];
const COL1 = ["s1.on s2 s3 s4 s5 s6 s7 s8", "-s9.on s10 s11 s12"];
const COL2 = ["g1 g2 g3 g4 g5 g6", "-g7 g8", "-g9 g10", "-g11 g12 g13 g14", "-g15"];
const COL3 = ["m1 m2 m3 m4 m5", "oct shuffle blackGrid", "redCam sun area spot half wreath", "nodes", "cell daisy tree rock", "hair",
  "-h1.on h2 h3", "-brush scissors", "-hairGhost", "-hairPick hairBox", "-hg1 hg2", "shirt"];

const column = (groups: string[], w: number, h: number) =>
  groups.map(g => group(g.replace(/^-/, ""), w, h, g.startsWith("-") ? "near" : ""));

@customElement("app-root")
export class AppRoot extends LitElement {
  static styles = css`
    :host {
      display: grid; grid-template-columns: minmax(0, 1fr) 27px 35px 36px minmax(0, 423px); column-gap: 4px;
      min-height: 100vh; box-sizing: border-box; overflow: hidden; background: #474747; color: #b4b4b4;
      font: 11px/14px "Open Sans", "Noto Sans", sans-serif;
    }
    *, *::before, *::after { box-sizing: border-box; }
    button, input, select { font: inherit; color: inherit; border: 0; margin: 0; padding: 0; background: none; border-radius: 0; min-width: 0; }
    .defs { position: absolute; }
    .icon { display: block; flex: none; }
    .glyph { font-family: "Open Sans", sans-serif; font-weight: 700; }

    .group { position: relative; display: flex; flex: none; border-radius: 4px; overflow: hidden; background: #6a6a6a; }
    .group::after { content: ""; position: absolute; inset: 0; border: 1px solid #2b2b2b; border-radius: 4px; pointer-events: none; }
    .tool { display: block; position: relative; }
    .on { background: #8ca6cf; }
    .pale { background: #dedeb2; }
    .olive { background: #757b3d; }
    .hl { box-shadow: inset 0 0 0 2px #f3f38a; }
    .row .tool + .tool { border-left: 1px solid #505050; margin-left: -1px; }

    .strip { display: flex; flex-direction: column; }
    .strip .group { flex-direction: column; align-items: center; margin-top: 10px; }
    .strip .group:first-child { margin-top: 0; }
    .strip .near { margin-top: 2px; }
    .strip .tool + .tool { box-shadow: 0 -1px 0 #505050; }
    .inset4 { padding-top: 4px; }
    .inset6 { padding-top: 6px; }

    .main { display: flex; flex-direction: column; min-width: 0; }
    .topbar { display: flex; align-items: flex-end; gap: 10px; height: 31px; overflow: hidden; margin-bottom: 4px; }
    .topbar .group:first-child { margin-left: -17px; }
    .topbar .group:nth-child(3) { margin-left: -8px; }
    .topbar .group:last-child { margin-left: auto; }
    .work { display: flex; flex: 1; min-height: 0; }
    .tools { flex: none; width: 14px; padding: 8px 3px 0 0; }
    .tools .group { align-items: flex-end; }
    .brand { writing-mode: vertical-rl; transform: rotate(180deg); margin-top: auto; height: 47px; width: 11px; overflow: hidden; display: flex; justify-content: flex-end; white-space: nowrap; font-size: 14px; line-height: 11px; color: #8f8f8f; }
    .center { flex: 1; min-width: 0; display: flex; flex-direction: column; }

    .menubar { display: flex; align-items: center; gap: 14px; padding-left: 5px; height: 20px; }
    .menu { white-space: nowrap; }
    .menu.lit { color: #ffffa0; }
    .grip { flex: none; width: 12px; height: 12px; margin-right: -5px; background: repeating-linear-gradient(120deg, #a5a5a5 0 1px, #2c2c2c 1px 2px, #474747 2px 3px); }
    .grip.thin { width: 5px; height: 18px; margin: 0; }

    .viewhead { display: flex; justify-content: space-between; align-items: center; border: solid #6a6a6a; border-width: 1px 0 0 1px; padding-right: 1px; }
    .viewtools { display: flex; }
    .viewport { position: relative; flex: 1; margin-left: 1px; border: 1px solid #a9a9a9; background: linear-gradient(#838383, #7c7c7c 25%, #6a6a6a 60%, #565656); }
    .caption { position: absolute; padding: 0 2px; line-height: 15px; color: #d2d2d2; background: rgba(70, 70, 70, .45); border-radius: 2px; }
    .persp { left: 2px; top: 2px; }
    .spacing { right: 3px; bottom: 2px; line-height: 16px; }
    .horizon { position: absolute; left: 890px; top: 0; width: 1px; height: 114px; background: #1f8f1f; }
    .gizmo { position: absolute; left: 26px; bottom: 20px; font-size: 10px; }

    .window { position: absolute; left: 365px; top: 113px; width: 1237px; background: #000; box-shadow: 0 3px 18px rgba(0, 0, 0, .45), 0 0 0 1px #444; }
    .titlebar { display: flex; align-items: center; gap: 5px; height: 31px; padding: 0 7px 0 8px; background: #fff; color: #111; }
    .titlebar h1 { flex: 1; margin: 0; font: 11px/16px "Noto Sans", sans-serif; }
    .winbtn { width: 30px; display: grid; place-items: center; margin-left: 10px; }
    .lvmenu { background: #676767; height: 20px; border-bottom: 1px solid #333; color: #bdbdbd; display: flex; align-items: center; }
    .lvmenu .ready { flex: 1; padding-left: 230px; }
    .lvmenu .menubar { height: 19px; }
    .lvtools { display: flex; align-items: center; gap: 6px; height: 37px; padding: 0 0 1px 2px; background: #484848; border-top: 1px solid #5a5a5a; }
    .lvtools .chn { display: flex; align-items: center; gap: 5px; padding-left: 3px; border-left: 1px solid #2e2e2e; height: 31px; }
    .log { margin: 0; height: 682px; padding: 0 4px; color: #a34f0a; }
    .status { margin-right: 36px; background: #3c3c3c; border-top: 1px solid #292929; border-bottom: 1px solid #222; height: 24px; display: flex; align-items: center; font-size: 14px; line-height: 18px; color: #e6e6e6; white-space: nowrap; }
    .status b { font-weight: 400; color: #5fe0b4; }
    .status .hot { color: #57b857; }
    .status .meter { width: 18px; height: 5px; background: linear-gradient(90deg, #3f8a3f 5px, #3c3c3c 5px 6px, #4d4d4d 6px); margin: 8px 0 0 2px; }
    .below { margin-right: 36px; height: 12px; background: #3f3f3f; border-bottom: 1px solid #262626; }

    .dialog { position: absolute; left: 1079px; top: 518px; width: 335px; background: #fff; color: #000; }
    .dialog header { display: flex; justify-content: space-between; align-items: center; height: 30px; padding: 0 9px 0 8px; }
    .dialog h2 { margin: 0; font: inherit; font-size: 11px; }
    .dialog .body { padding: 24px 11px 21px; line-height: 13px; }
    .dialog p { margin: 0 0 13px; white-space: pre-line; }
    .dialog p:last-child { margin: 0 0 2px; }
    .dialog footer { display: flex; justify-content: flex-end; padding: 10px 16px 11px; background: #f0f0f0; }
    .ok { width: 73px; height: 21px; border: 2px solid #0078d7; background: #e1e1e1; }

    .field { display: flex; align-items: center; height: 18px; padding: 0 3px 0 4px; background: #333; border: 1px solid; border-color: #262626 #626262 #626262 #262626; min-width: 0; }
    .field input { flex: 1; width: 0; height: 16px; outline: 0; }
    .f66 { width: 66px; flex: none; display: grid; }
    .drop { display: grid; align-items: center; height: 18px; border-radius: 3px; border: 1px solid #303030; background: linear-gradient(#6f6f6f, #646464); color: #c8c8c8; }
    .drop select { grid-area: 1 / 1; appearance: none; padding: 0 14px 0 6px; width: 100%; height: 16px; }
    .drop svg { grid-area: 1 / 1; justify-self: end; margin-right: 4px; pointer-events: none; }
    .drop.dark { width: 67px; background: #313131; border-color: #555; }

    .timeline { display: flex; align-items: center; gap: 4px; padding-top: 4px; height: 29px; }
    .ruler { flex: 1; margin-right: 2px; min-width: 0; display: flex; justify-content: space-between; height: 24px; padding: 0 7px 0 6px; background: linear-gradient(#303030 14px, #3f3f3f 14px 15px, #343434 15px); border-bottom: 1px solid #626262; border-radius: 2px; }
    .tick { width: 0; display: flex; flex-direction: column; align-items: center; justify-content: space-between; white-space: nowrap; }
    .tick i { flex: none; width: 1px; height: 4px; background: #b0b0b0; }
    .tick.even i { height: 5px; }
    .tick .num { line-height: 13px; }
    .tick.mark { background: linear-gradient(#666, #666) center top / 1px 17px no-repeat; width: 1px; }
    .tick.zero .num { color: #5fe596; display: flex; gap: 1px; margin-left: 9px; }
    .tick.zero .num::before { content: ""; width: 9px; height: 14px; background: #5fe596; }
    .transport { display: flex; align-items: center; gap: 10px; height: 33px; padding-bottom: 2px; }
    .transport .lead { flex: 1; display: flex; align-items: center; gap: 5px; min-width: 0; }
    .range { flex: 1; display: flex; align-items: center; gap: 6px; height: 16px; padding: 0 5px; border-radius: 4px; border: 1px solid #2a2a2a; background: linear-gradient(#7b7b7b, #626262); color: #2c2c2c; }
    .range .fill { flex: 1; }
    .transport .group { height: 28px; }

    .docks { display: grid; grid-template-columns: minmax(0, 1fr) 297px; gap: 4px; min-height: 125px; }
    .dock { border: solid #6a6a6a; border-width: 1px 0 0 1px; border-right: 1px solid #333; }
    .dock .menubar { height: 22px; border-bottom: 1px solid #333; box-shadow: 0 1px 0 #6a6a6a; }
    .coordhead { display: grid; grid-template-columns: 12px 92px 92px 1fr; align-items: center; height: 21px; padding-left: 5px; border-bottom: 1px solid #333; box-shadow: 0 1px 0 #6a6a6a; }
    .coordhead span:nth-child(n + 2) { padding-left: 7px; }
    .coords { display: grid; grid-template-columns: 8px 84px 8px 84px 8px 82px; gap: 2px 3px; align-items: center; padding: 5px 4px 0 2px; }
    .pill { height: 18px; border-radius: 9px; border: 1px solid #2e2e2e; background: linear-gradient(#777, #646464); color: #cfcfcf; padding: 0 11px; white-space: nowrap; }
    .coords .drop, .coords .pill { margin-top: 2px; }

    .side { display: flex; flex-direction: column; min-width: 0; overflow: hidden; }
    .sidebar { display: flex; gap: 10px; height: 47px; margin-bottom: 4px; }
    .sidebar .grip { height: 45px; margin-right: -7px; }
    .sidebar .group { border-radius: 0 0 4px 4px; }
    .sidebar .group::after { border-radius: 0 0 4px 4px; border-top: 0; }
    .panel { border: solid #6a6a6a; border-width: 1px 0 0 1px; }
    .objects { flex: 1; display: flex; flex-direction: column; border-bottom: 1px solid #6a6a6a; margin-bottom: 4px; }
    .panel .menubar { height: 23px; border-bottom: 1px solid #333; box-shadow: 0 1px 0 #6a6a6a; }
    .tree { flex: 1; margin-top: 1px; display: grid; grid-template-columns: 80px 40px 1fr; }
    .tree > div { border-right: 1px solid #303030; }
    .tree > div:nth-child(2) { border-right: 2px solid #6a6a6a; }
    .tree > div:last-child { border-right: 0; }
    .cell { display: flex; align-items: center; gap: 3px; height: 20px; background: #525252; color: #f0b63c; padding-left: 7px; }
    .tags { padding-left: 3px; gap: 4px; }
    .attrs { min-height: 550px; }
    .attrs .menubar { height: 22px; }
    .title { display: flex; align-items: center; gap: 6px; height: 26px; padding-left: 4px; }
    .tabs { display: flex; margin-left: 1px; width: 275px; height: 18px; border: 1px solid #2b2b2b; border-radius: 3px; overflow: hidden; background: #6a6a6a; }
    .tab { flex: 1 1 0; color: #c4c4c4; }
    .tab + .tab { border-left: 1px solid #2b2b2b; }
    .tab.on { color: #000; background: #8ca6cf; }
    .attrs h3 { margin: 5px 0 0 1px; padding-left: 2px; font: inherit; line-height: 15px; background: #333; color: #c0c0c0; }
    .presets { display: flex; gap: 13px; padding: 4px 13px; height: 26px; }
    .rule { height: 1px; margin: 0 0 3px 1px; background: #666; }
    .props { display: grid; grid-template-columns: 15px 100px minmax(0, 1fr); column-gap: 4px; grid-auto-rows: 20px; align-items: center; padding-left: 3px; }
    .props .name { display: flex; white-space: nowrap; overflow: hidden; }
    .props .name::after { content: ". . . . . . . . . . . . . . . . . . ."; overflow: hidden; flex: 1; width: 0; margin-left: 2px; }
    .radio { appearance: none; width: 14px; height: 14px; margin: 0; border-radius: 50%; background: #8a8a8a; border: 2px solid #747474; box-shadow: inset 0 0 0 2px #2d2d2d; }
    .vals { display: flex; gap: 5px; align-items: center; }
    .vals .field { width: 67px; flex: none; }
    .vals .narrow .field { width: 62px; }
    .slider { appearance: none; flex: 1; height: 15px; border: 1px solid #292929; background: linear-gradient(90deg, #757575 var(--fill), #303030 var(--fill)); }
    .slider::-webkit-slider-thumb { appearance: none; width: 2px; height: 13px; background: #ffb000; border-radius: 0; }
    .round { width: 18px; height: 18px; border-radius: 50%; border: 1px solid #2e2e2e; background: #6a6a6a; display: grid; place-items: center; }
    .texture { flex: 1; height: 18px; border-radius: 9px 0 0 9px; border: 1px solid #2e2e2e; border-right: 0; background: #696969; margin-left: -3px; }
    .vals .drop { flex: 1; border-right: 0; border-radius: 3px 0 0 3px; }
    .vals .drop svg { display: none; }
    .help { display: block; margin: 8px 0 0 6px; }
  `;

  private frames = Array.from({ length: 91 }, (_, i) => i);

  private stat(label: string, value: string, pad: string) {
    return html`<span style="margin-right:${pad}">${label}<b>${value}</b></span>`;
  }

  private coordRow(a: string, b: string, c: string) {
    return html`<span>${a}</span>${field(`Position ${a}`, "0 cm")}<span>${b}</span>${field(`Size ${b}`, "0 cm")}<span>${c}</span>${field(`Rotation ${c}`, "0 °")}`;
  }

  private prop(name: string, content: unknown, radio = true) {
    return html`${radio ? html`<input type="radio" class="radio" aria-label=${name + " track"}>` : html`<span></span>`}
      <span class="name">${name}</span><div class="vals">${content}</div>`;
  }

  private liveViewer() {
    return html`<section class="window" aria-label="Live Viewer">
      <div class="titlebar">
        <svg width="16" height="18" viewBox="0 0 16 18" aria-hidden="true"><ellipse cx="8" cy="9" rx="7.500" ry="8.500" fill="#c9c9d6"/><ellipse cx="7.500" cy="9" rx="6" ry="7" fill="#131b52"/><ellipse cx="10" cy="7" rx="3.500" ry="4" fill="#6f83d8"/><ellipse cx="11" cy="6" rx="1.500" ry="2" fill="#fff"/></svg>
        <h1>Live Viewer 2020.1_XB1-test2 (7 days left)</h1>
        <button class="winbtn" aria-label="Minimize"><svg width="11" height="11" viewBox="0 0 11 11"><path d="M0 5.500H11" stroke="#111"/></svg></button>
        <button class="winbtn" aria-label="Maximize"><svg width="11" height="11" viewBox="0 0 11 11"><path d="M.5 .5H10.500V10.500H.5Z" fill="none" stroke="#111"/></svg></button>
        <button class="winbtn" aria-label="Close"><svg width="11" height="11" viewBox="0 0 11 11"><path d="M0 0L11 11M11 0L0 11" stroke="#111"/></svg></button>
      </div>
      <div class="lvmenu">${menu("File|Cloud|Objects|Materials|Compare|Options|Help|Gui", "Live Viewer")}<span class="ready">[READY]</span></div>
      <div class="lvtools">
        ${["lvSwirl", "lvLoop", "lvPause", "lvR", "lvGear", "lvLock", "lvBall", "lvRegion", "lvRegion", "lvF", "lvM"].map(n => tool(n, 28, 28))}
        <div class="chn"><span>Chn:</span>${drop("Channel", "DL", "dark")}</div>
      </div>
      <p class="log">Check:0ms./0ms. MeshGen:0ms. Update0ms. Nodes:0 Movable:0 txCached:0</p>
      <div class="status">
        ${this.stat("Rendering:", "", "31px")}${this.stat("Ms/sec: ", "....", "14px")}${this.stat("Time: ", "....", "5px")}${this.stat("Spp/maxspp: ", "....", "18px")}
        ${this.stat("Tri: ", "0/0", "14px")}${this.stat("Mesh: ", "0", "9px")}${this.stat("Hair: ", "0", "19px")}${this.stat("RTX:", "off", "26px")}
        <span>GPU:</span><span class="meter"></span><span class="hot" style="margin:0 9px 0 18px">39°C</span>
        ${this.stat("NetRender: ", "0/0", "20px")}${this.stat("Slaves: ", "0", "0px")}
      </div>
      <div class="below"></div>
    </section>`;
  }

  private errorDialog() {
    return html`<section class="dialog" role="dialog" aria-label="Application Error">
      <header><h2>CINEMA 4D: Application Error</h2>
        <button aria-label="Close dialog"><svg width="11" height="11" viewBox="0 0 11 11"><path d="M0 0L11 11M11 0L0 11" stroke="#111" stroke-width="1.200"/></svg></button></header>
      <div class="body">
        <p>More information can be found in
'C:\\Users\\Никита\\AppData\\Roaming\\MAXON\\Cinema 4D
R19_BFE04C39\\_bugreports\\_BugReport.txt'.</p>
        <p>After clicking 'OK' unsaved scene files will be saved as
'_bugreports/_recovery_xxx.c4d'</p>
      </div>
      <footer><button class="ok">OK</button></footer>
    </section>`;
  }

  private sidePanels() {
    return html`<aside class="side">
      <div class="sidebar row"><span class="grip thin"></span>
        <div class="group" role="group">${tool("octane", 50, 47)}${tool("recR", 36, 47)}${tool("cog", 42, 47)}</div>
        <div class="group" role="group">${tool("rv", 36, 47)}</div>
        <div class="group" role="group">${tool("bricks", 36, 47)}${tool("fireWin", 36, 47)}</div>
      </div>
      <section class="panel objects">
        ${menu("File|Edit|View|Objects|*Tags|Bookmarks", "Object manager")}
        <div class="tree">
          <div><div class="cell"><svg width="8" height="20" viewBox="0 0 8 20" aria-hidden="true"><path d="M.5 0V11.500H8" fill="none" stroke="#a0a0a0"/></svg>
            <svg width="14" height="16" viewBox="1 0 17 19" aria-hidden="true">${flame}</svg><span>Volume</span></div></div>
          <div><div class="cell tags"><svg width="34" height="14" viewBox="0 0 34 14" aria-hidden="true"><rect y="1" width="12" height="12" rx="1.500" fill="#808080"/><path d="M1 12L11 2" stroke="#4a4a4a" stroke-width="1.500"/><circle cx="20" cy="3" r="2.200" fill="#808080"/><circle cx="20" cy="11" r="2.200" fill="#808080"/><path d="M25 8L28 11L33 3" fill="none" stroke="#3fe38a" stroke-width="1.600"/></svg></div></div>
          <div><div class="cell"></div></div>
        </div>
      </section>
      <section class="panel attrs">
        ${menu("Mode|Edit|User Data", "Attributes")}
        <div class="title"><svg width="17" height="19" viewBox="1 0 17 19" aria-hidden="true">${flame}</svg><span>Octane Volume [Volume]</span></div>
        <div class="tabs">${["Basic", "Coord.", "Main", "Generate", "Medium"].map(t => html`<button class="tab ${t === "Generate" ? "on" : ""}">${t}</button>`)}</div>
        <h3>Generate</h3>
        <div class="presets">${["Default", "Cloud1", "Random Cloud"].map(t => html`<button class="pill">${t}</button>`)}</div>
        <div class="rule"></div>
        <div class="props">
          ${this.prop("Size", html`${field("Size X", "200 cm")}${field("Size Y", "100 cm")}${field("Size Z", "100 cm")}`)}
          ${this.prop("Voxel Size(Editor)", html`<span class="narrow">${field("Voxel size", "5.")}</span><input class="slider" type="range" min="0" max="100" value="96" style="--fill:96%" aria-label="Voxel size slider">`)}
          ${this.prop("Voxel mult.(Render)", field("Voxel multiplier", "1"))}
          ${this.prop("Edge feather", html`<span class="narrow">${field("Edge feather", "0")}</span><input class="slider" type="range" min="0" max="100" value="0" style="--fill:0%" aria-label="Edge feather slider">`)}
          ${this.prop("Texture", html`<button class="round" aria-label="Texture menu"><svg width="5" height="6" viewBox="0 0 5 6"><path d="M0 0L5 3L0 6Z" fill="#e5e5e5"/></svg></button><button class="texture" aria-label="Texture"></button>`, false)}
          ${this.prop("Display Type", drop("Display type", "Box"))}
        </div>
        <svg class="help" width="42" height="34" viewBox="0 0 42 34" aria-hidden="true">${swirl(15, 18, 0.84, "#d9d9d9")}<text x="21" y="8" class="glyph" font-size="7" fill="#c9c9c9">HELP</text></svg>
      </section>
    </aside>`;
  }

  render() {
    return html`
      <svg class="defs" width="0" height="0" aria-hidden="true"><defs>
        <radialGradient id="gOrange" cx=".6" cy=".3"><stop offset="0" stop-color="#ffb45e"/><stop offset="1" stop-color="#f0862a"/></radialGradient>
        <radialGradient id="gPeach"><stop offset="0" stop-color="#ffd177"/><stop offset="1" stop-color="#ffaa48"/></radialGradient>
        <radialGradient id="gSteel" cx=".35" cy=".25"><stop offset="0" stop-color="#a4b4bb"/><stop offset="1" stop-color="#4d626c"/></radialGradient>
        <linearGradient id="gDeep"><stop offset=".5" stop-color="#33424a"/><stop offset=".5" stop-color="#55717f"/></linearGradient>
        <linearGradient id="gBeam" x2="1" y2="1"><stop offset="0" stop-color="#fffdf0"/><stop offset=".6" stop-color="#dcd8c6"/><stop offset="1" stop-color="#4b493f"/></linearGradient>
        <radialGradient id="gCell"><stop offset=".2" stop-color="#1d9a2a"/><stop offset="1" stop-color="#b6dcae"/></radialGradient>
      </defs></svg>
      <div class="main">
        <div class="topbar row">${TOP.map(g => group(g))}</div>
        <div class="work">
          <div class="strip tools">${column(LEFT, 36, 36)}<span class="brand">MAXON CINEMA 4D</span></div>
          <div class="center">
            <div class="viewhead">${menu("View|Cameras|Display|*Options|Filter|Panel|*ProRender", "Viewport")}
              <div class="viewtools"><svg width="66" height="16" viewBox="0 0 66 16" aria-hidden="true" fill="#1e1e1e"><path d="M7 1L10 5H4ZM7 15L4 11H10ZM0 8L4 5V11ZM14 8L10 11V5Z"/><circle cx="7" cy="8" r="1.500"/><path d="M24 1L28 5H25.500V9H29L24 15L19 9H22.500V5H20Z"/><path d="M37 13Q32 5 39 3M44 3Q48 11 41 13" fill="none" stroke="#1e1e1e" stroke-width="2"/><path d="M38 0L43 3L38 6ZM42 10L37 13L42 16Z"/><path d="M53 1.500H65V14.500H53ZM53 9.500H58V14" fill="none" stroke="#1e1e1e" stroke-width="1.500"/></svg></div>
            </div>
            <div class="viewport">
              <span class="caption persp">Perspective</span>
              <div class="horizon"></div>
              <svg class="gizmo" width="34" height="42" viewBox="0 0 34 42" aria-hidden="true"><path d="M7.500 28V12" stroke="#3fe03f"/><path d="M7.500 28L20 23" stroke="#3f3fe0" stroke-width="1.300"/><path d="M7.500 28L20 34" stroke="#e03f3f" stroke-width="1.300"/><text x="4" y="9" fill="#3fe03f">Y</text><text x="23" y="25" fill="#3f3fe0">Z</text><text x="23" y="39" fill="#e03f3f">X</text></svg>
              <span class="caption spacing">Grid Spacing : 100 cm</span>
              ${this.liveViewer()}${this.errorDialog()}
            </div>
            <div class="timeline"><span class="grip thin"></span>
              <div class="ruler">${this.frames.map(i => html`<div class="tick ${i % 2 ? "" : "even"} ${i === 0 ? "zero" : i % 30 === 0 ? "mark" : ""}">
                <span class="num">${i % 2 ? "" : i}</span><i></i></div>`)}</div>
              <span class="f66">${field("Current frame", "0 F")}</span>
            </div>
            <div class="transport">
              <div class="lead"><span class="grip thin"></span><span class="f66">${field("Start frame", "0 F")}</span>
                <div class="range"><svg width="7" height="9" viewBox="0 0 7 9" aria-hidden="true"><path d="M7 0V9L0 4.500Z" fill="#e0e0e0"/></svg><span>0 F</span><span class="fill"></span><span>90 F</span><svg width="7" height="9" viewBox="0 0 7 9" aria-hidden="true"><path d="M0 0V9L7 4.500Z" fill="#e0e0e0"/></svg></div>
                <span class="f66">${field("End frame", "90 F")}</span></div>
              ${["first", "prevKey prev play next nextKey", "last", "key autoKey askKey", "tMove.on tScale.on tRotate.on tP.on tDots", "film.on.menu"].map(g => group(g, 28, 28))}
            </div>
            <div class="docks">
              <section class="dock">${menu("*Create|Edit|Function|Texture", "Materials")}</section>
              <section class="dock">
                <div class="coordhead"><span class="grip"></span><span>Position</span><span>Size</span><span>Rotation</span></div>
                <div class="coords">
                  ${this.coordRow("X", "X", "H")}${this.coordRow("Y", "Y", "P")}${this.coordRow("Z", "Z", "B")}
                  <span></span>${drop("Coordinate mode", "Object (Rel)")}<span></span>${drop("Size mode", "Size")}<span></span><button class="pill">Apply</button>
                </div>
              </section>
            </div>
          </div>
        </div>
      </div>
      <div class="strip inset4">${column(COL1, 28, 28)}</div>
      <div class="strip inset6">${column(COL2, 36, 36)}</div>
      <div class="strip inset4">${column(COL3, 36, 36)}</div>
      ${this.sidePanels()}`;
  }
}
